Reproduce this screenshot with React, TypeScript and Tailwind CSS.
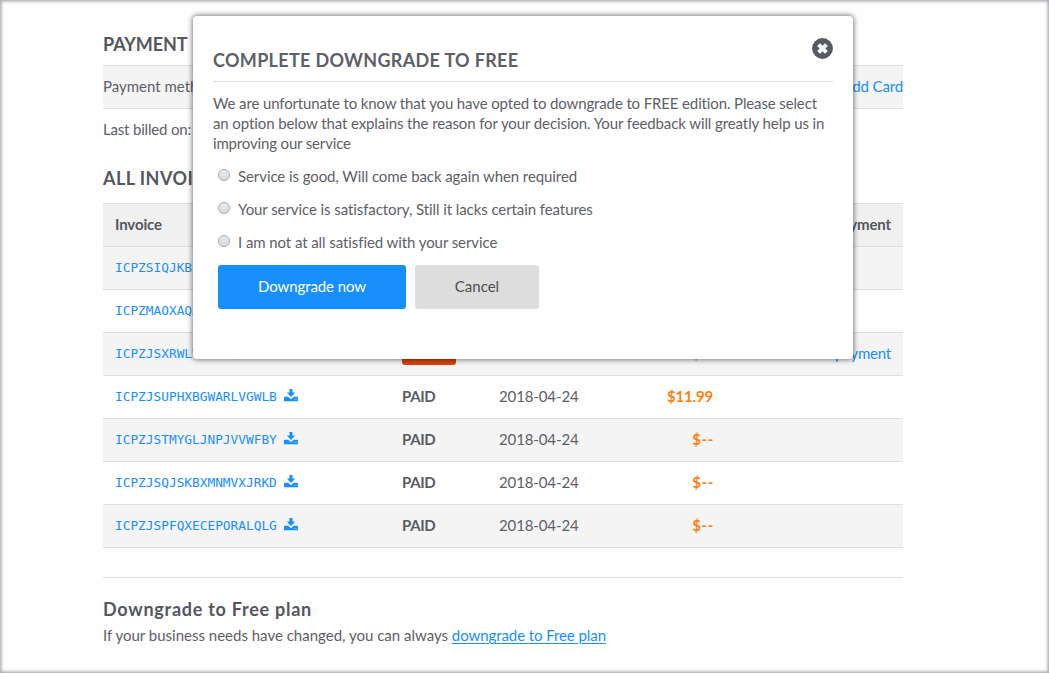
type Invoice = {
  id: string;
  status: "PAID" | "UNPAID";
  date: string;
  amount: string;
  action?: string;
};

const invoices: Invoice[] = [
  { id: "ICPZSIQJKBLMNXRWTAGHC", status: "PAID", date: "2018-05-24", amount: "$--" },
  { id: "ICPZMAOXAQXDRNVKPLWTE", status: "PAID", date: "2018-05-24", amount: "$--" },
  { id: "ICPZJSXRWLVGHTNQKBDMA", status: "UNPAID", date: "2018-04-24", amount: "$--", action: "Make payment" },
  { id: "ICPZJSUPHXBGWARLVGWLB", status: "PAID", date: "2018-04-24", amount: "$11.99" },
  { id: "ICPZJSTMYGLJNPJVVWFBY", status: "PAID", date: "2018-04-24", amount: "$--" },
  { id: "ICPZJSQJSKBXMNMVXJRKD", status: "PAID", date: "2018-04-24", amount: "$--" },
  { id: "ICPZJSPFQXECEPORALQLG", status: "PAID", date: "2018-04-24", amount: "$--" },
];

const reasons = [
  "Service is good, Will come back again when required",
  "Your service is satisfactory, Still it lacks certain features",
  "I am not at all satisfied with your service",
];

function DownloadIcon() {
  return (
    <svg viewBox="0 0 14 13" className="mb-1 h-[13px] w-[14px] shrink-0" fill="currentColor">
      <path d="M5.5 0h3v3.6h2.7L7 8 2.8 3.6h2.7z" />
      <path d="M.6 7.8h3.6L7 10.2l2.8-2.4h3.6l.6.8v3.6H0V8.6z" />
      <path d="M9.8 10.3h3.4" stroke="#ffffff" strokeOpacity=".5" strokeWidth=".8" />
    </svg>
  );
}

function CloseIcon() {
  return (
    <svg viewBox="0 0 21 21" className="size-[21px]">
      <circle cx="10.5" cy="10.5" r="10.4" fill="#565a64" />
      <path d="M6.6 6.6l7.8 7.8M14.4 6.6l-7.8 7.8" stroke="#fff" strokeWidth="4" />
    </svg>
  );
}

function InvoiceRow({ id, status, date, amount, action }: Invoice) {
  return (
    <div className="grid h-[43px] grid-cols-[299px_97px_134px_80px_1fr] items-center border-t border-[#dddddd] odd:bg-[#f4f4f4]">
      <div className="flex items-center gap-[7px] pl-3 text-[#188fff]">
        <span className="font-['DejaVu_Sans_Mono',monospace] text-[12.8px]">{id}</span>
        <DownloadIcon />
      </div>
      {status === "PAID" ? (
        <span className="pb-0.5 font-bold tracking-[-0.36px] text-[#5a5d63]">PAID</span>
      ) : (
        <span className="mb-0.5 flex h-[23px] w-[54px] items-center justify-center rounded-[3px] bg-[#d9420b] text-xs font-bold text-white">
          UNPAID
        </span>
      )}
      <span className="pb-0.5 tracking-[-0.12px]">{date}</span>
      <span
        className={
          amount === "$--"
            ? "-mr-px pb-0.5 text-right font-bold tracking-[0.6px] text-[#ff7f11]"
            : "pb-0.5 text-right font-bold tracking-[-0.18px] text-[#ff7f11]"
        }
      >
        {amount}
      </span>
      <a className="pr-3 pb-0.5 text-right tracking-[-0.2px] text-[#188fff]">{action}</a>
    </div>
  );
}

function DowngradeDialog() {
  return (
    <div
      role="dialog"
      className="absolute top-4 left-[193px] h-[343px] w-[660px] rounded-[4px] bg-white px-5 shadow-[0_0_5px_1px_rgba(0,0,0,0.5)]"
    >
      <div className="flex h-[66px] items-start justify-between border-b border-[#dddddd]">
        <h2 className="mt-8 text-[18px] leading-6 font-bold tracking-[0.32px]">COMPLETE DOWNGRADE TO FREE</h2>
        <button className="mt-[22px]" aria-label="Close">
          <CloseIcon />
        </button>
      </div>
      <p className="mt-[11px] leading-5 whitespace-nowrap">
        <span className="tracking-[-0.13px]">
          We are unfortunate to know that you have opted to downgrade to FREE edition. Please select
        </span>
        <br />
        <span className="tracking-[-0.1px]">
          an option below that explains the reason for your decision. Your feedback will greatly help us in
        </span>
        <br />
        <span className="tracking-[-0.16px]">improving our service</span>
      </p>
      <div className="mt-2 flex flex-col pl-[5px]">
        {reasons.map((reason) => (
          <label key={reason} className="flex h-[33px] items-center gap-2 tracking-[-0.08px]">
            <input
              type="radio"
              name="reason"
              className="mb-[5px] size-3 appearance-none rounded-full border border-[#a9a9a9] bg-linear-to-b from-[#e9e9e9] to-[#dadada]"
            />
            <span className="pb-[3px]">{reason}</span>
          </label>
        ))}
      </div>
      <div className="mt-[5px] flex gap-[9px] pl-[5px]">
        <button className="h-11 w-[188px] rounded-[3px] bg-[#188fff] pb-0.5 tracking-[-0.09px] text-white">Downgrade now</button>
        <button className="h-11 w-[124px] rounded-[3px] bg-[#dddddd] pb-0.5 text-[#4d4d4d]">Cancel</button>
      </div>
    </div>
  );
}

export default function App() {
  return (
    <div className="relative h-[673px] w-[1049px] overflow-hidden bg-[#fefefe] font-['Lato',sans-serif] text-[15px] leading-5 text-[#5d6067]">
      <main className="ml-[103px] w-[800px]">
        <h2 className="pt-8 pb-[9px] text-[18px] leading-6 font-bold tracking-[-0.1px] [word-spacing:3px] text-[#54575e]">PAYMENT DETAILS</h2>
        <div className="flex h-11 items-center justify-between border-y border-[#dddddd] bg-[#f4f4f4] pb-0.5">
          <span>Payment method</span>
          <a className="tracking-[-0.15px] text-[#188fff]">Add Card</a>
        </div>
        <div className="flex h-[42px] items-center pb-0.5 tracking-[-0.18px]">Last billed on: 2018-05-24</div>
        <h2 className="pt-[15px] pb-[13px] text-[18px] leading-6 font-bold tracking-[0.45px] text-[#54575e]">ALL INVOICES</h2>

        <div className="grid h-[43px] grid-cols-[299px_97px_134px_80px_1fr] items-center border-t border-[#dddddd] bg-[#f0f0f0] pb-0.5 font-bold tracking-[-0.13px] text-[#54575e]">
          <span className="pl-3">Invoice</span>
          <span>Status</span>
          <span>Date</span>
          <span className="text-right">Amount</span>
          <span className="pr-3 text-right">Payment</span>
        </div>
        <div>
          {invoices.map((invoice) => (
            <InvoiceRow key={invoice.id} {...invoice} />
          ))}
        </div>
        <div className="h-[30px] border-t border-[#dddddd]" />

        <section className="border-t border-[#dddddd] pt-[19px]">
          <h3 className="text-[18px] leading-6 font-bold tracking-[0.74px] text-[#54575e]">Downgrade to Free plan</h3>
          <p className="mt-1">
            If your business needs have changed, you can always{" "}
            <a className="tracking-[-0.08px] text-[#188fff] underline underline-offset-2">downgrade to Free plan</a>
          </p>
        </section>
      </main>
      <DowngradeDialog />
      <div className="pointer-events-none absolute inset-0 shadow-[inset_0_0_3px_1.5px_rgba(90,90,100,0.5)]" />
    </div>
  );
}
